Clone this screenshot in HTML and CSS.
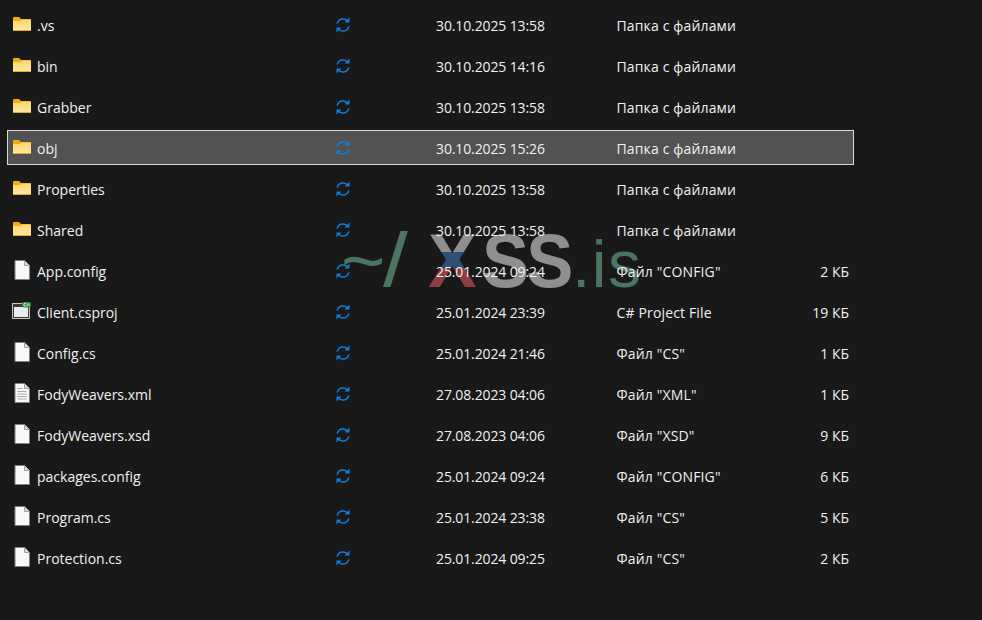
FILE: index.html
```html
<!DOCTYPE html>
<html lang="ru">
<head>
<meta charset="utf-8">
<title>Проводник</title>
<link rel="stylesheet" href="styles.css">
</head>
<body>
<svg class="defs" width="0" height="0" aria-hidden="true">
  <defs>
    <linearGradient id="fg" x1="0" y1="0" x2="0" y2="1">
      <stop offset="0" stop-color="#fbd667"/>
      <stop offset="1" stop-color="#ffe9a6"/>
    </linearGradient>
    <symbol id="folder" viewBox="0 0 18 14">
      <path d="M0 1a1 1 0 0 1 1-1h5l2 2h9a1 1 0 0 1 1 1v3H0z" fill="#f3ac14"/>
      <path d="M0 4h7l2-1.5h8a1 1 0 0 1 1 1V13a1 1 0 0 1-1 1H1a1 1 0 0 1-1-1z" fill="url(#fg)"/>
      <rect x="0" y="13" width="18" height="1" fill="#e6a92a"/>
    </symbol>
    <symbol id="file" viewBox="0 0 16 20">
      <path d="M1 .5H10.5L15.5 5.5V19.5H1z" fill="#f8f8f8" stroke="#7f7f7f"/>
      <path d="M10.5 .5V5.5H15.5" fill="#dcdcdc" stroke="#a0a0a0"/>
    </symbol>
    <symbol id="textfile" viewBox="0 0 16 20">
      <path d="M1 .5H10.5L15.5 5.5V19.5H1z" fill="#f8f8f8" stroke="#7f7f7f"/>
      <path d="M10.5 .5V5.5H15.5" fill="#dcdcdc" stroke="#a0a0a0"/>
      <path d="M3.5 5.5h5M3.5 8.5h9M3.5 11h9M3.5 13.5h9M3.5 16h9" stroke="#a8a8a8"/>
    </symbol>
    <symbol id="proj" viewBox="0 0 19 17">
      <rect x=".5" y="1.5" width="17" height="15" fill="#3a3a3a" stroke="#c4c4c4"/>
      <rect x="2" y="5" width="14" height="10" fill="#ececec"/>
      <rect x="10" y="0" width="9" height="5.5" rx="2" fill="#2f8f45"/>
      <path d="M13.6 1.4a1.4 1.4 0 1 0 0 2.7" fill="none" stroke="#e8f5ea" stroke-width="1"/>
      <path d="M15.2 1.4v2.7M17 1.4v2.7" stroke="#e8f5ea" stroke-width=".8"/>
    </symbol>
    <symbol id="sync" viewBox="0 0 16 16">
      <g fill="none" stroke="#0f7fdc" stroke-width="1.5">
        <path d="M2.2 6.6A6 6 0 0 1 13 4.6"/>
        <path d="M13.8 9.4A6 6 0 0 1 3 11.4"/>
      </g>
      <path d="M9.6 5.4h4.9V.6z" fill="#0f7fdc"/>
      <path d="M6.4 10.6H1.5v4.8z" fill="#0f7fdc"/>
    </symbol>
  </defs>
</svg>

<div class="wm" aria-hidden="true"><span class="wm-tilde">~</span><span class="wm-slash">/</span><span class="wm-x">X</span><span class="wm-ss">SS</span><span class="wm-is">.is</span></div>

<main class="list">
  <div class="row"><svg class="ico folder"><use href="#folder"/></svg><span class="name">.vs</span><svg class="sync"><use href="#sync"/></svg><span class="date">30.10.2025 13:58</span><span class="type">Папка с файлами</span><span class="size"></span></div>
  <div class="row"><svg class="ico folder"><use href="#folder"/></svg><span class="name">bin</span><svg class="sync"><use href="#sync"/></svg><span class="date">30.10.2025 14:16</span><span class="type">Папка с файлами</span><span class="size"></span></div>
  <div class="row"><svg class="ico folder"><use href="#folder"/></svg><span class="name">Grabber</span><svg class="sync"><use href="#sync"/></svg><span class="date">30.10.2025 13:58</span><span class="type">Папка с файлами</span><span class="size"></span></div>
  <div class="row selected"><svg class="ico folder"><use href="#folder"/></svg><span class="name">obj</span><svg class="sync"><use href="#sync"/></svg><span class="date">30.10.2025 15:26</span><span class="type">Папка с файлами</span><span class="size"></span></div>
  <div class="row"><svg class="ico folder"><use href="#folder"/></svg><span class="name">Properties</span><svg class="sync"><use href="#sync"/></svg><span class="date">30.10.2025 13:58</span><span class="type">Папка с файлами</span><span class="size"></span></div>
  <div class="row"><svg class="ico folder"><use href="#folder"/></svg><span class="name">Shared</span><svg class="sync"><use href="#sync"/></svg><span class="date">30.10.2025 13:58</span><span class="type">Папка с файлами</span><span class="size"></span></div>
  <div class="row"><svg class="ico file"><use href="#file"/></svg><span class="name">App.config</span><svg class="sync"><use href="#sync"/></svg><span class="date">25.01.2024 09:24</span><span class="type">Файл "CONFIG"</span><span class="size">2 КБ</span></div>
  <div class="row"><svg class="ico proj"><use href="#proj"/></svg><span class="name">Client.csproj</span><svg class="sync"><use href="#sync"/></svg><span class="date">25.01.2024 23:39</span><span class="type">C# Project File</span><span class="size">19 КБ</span></div>
  <div class="row"><svg class="ico file"><use href="#file"/></svg><span class="name">Config.cs</span><svg class="sync"><use href="#sync"/></svg><span class="date">25.01.2024 21:46</span><span class="type">Файл "CS"</span><span class="size">1 КБ</span></div>
  <div class="row"><svg class="ico file"><use href="#textfile"/></svg><span class="name">FodyWeavers.xml</span><svg class="sync"><use href="#sync"/></svg><span class="date">27.08.2023 04:06</span><span class="type">Файл "XML"</span><span class="size">1 КБ</span></div>
  <div class="row"><svg class="ico file"><use href="#file"/></svg><span class="name">FodyWeavers.xsd</span><svg class="sync"><use href="#sync"/></svg><span class="date">27.08.2023 04:06</span><span class="type">Файл "XSD"</span><span class="size">9 КБ</span></div>
  <div class="row"><svg class="ico file"><use href="#file"/></svg><span class="name">packages.config</span><svg class="sync"><use href="#sync"/></svg><span class="date">25.01.2024 09:24</span><span class="type">Файл "CONFIG"</span><span class="size">6 КБ</span></div>
  <div class="row"><svg class="ico file"><use href="#file"/></svg><span class="name">Program.cs</span><svg class="sync"><use href="#sync"/></svg><span class="date">25.01.2024 23:38</span><span class="type">Файл "CS"</span><span class="size">5 КБ</span></div>
  <div class="row"><svg class="ico file"><use href="#file"/></svg><span class="name">Protection.cs</span><svg class="sync"><use href="#sync"/></svg><span class="date">25.01.2024 09:25</span><span class="type">Файл "CS"</span><span class="size">2 КБ</span></div>
</main>
</body>
</html>
```
FILE: styles.css
```css
html, body { margin: 0; height: 100%; }
body {
  background: #191919;
  color: #f0f0f0;
  font-family: "Open Sans", "Noto Sans", sans-serif;
  font-size: 14px;
  overflow: hidden;
  position: relative;
}
.defs { position: absolute; }
.list {
  position: relative;
  display: flex;
  flex-direction: column;
  gap: 6px;
  width: 847px;
  margin-left: 7px;
  padding-top: 7px;
}
.row {
  display: grid;
  grid-template-columns: 29px 298px 101px 181px 1fr 60px;
  align-items: center;
  box-sizing: border-box;
  height: 35px;
  padding-right: 4px;
  border: 1px solid transparent;
}
.row.selected { background: #525252; border-color: #d8d8d8; }
.ico { display: block; justify-self: start; }
.ico.folder { width: 18px; height: 14px; margin-top: -1px; margin-left: 5px; }
.ico.file { width: 16px; height: 20px; margin-left: 6px; margin-top: -2px; }
.ico.proj { width: 19px; height: 17px; margin-left: 4px; margin-top: -3px; }
.sync { display: block; width: 16px; height: 16px; margin-top: 1px; }
.name, .date, .type, .size { white-space: nowrap; padding-top: 2px; }
.date { letter-spacing: -0.12px; }
.type { letter-spacing: 0.15px; margin-left: -0.5px; }
.size { text-align: right; }
.wm {
  position: absolute;
  left: 341px;
  top: 216px;
  display: flex;
  align-items: baseline;
  font-family: "Liberation Sans", sans-serif;
  font-size: 76px;
  line-height: 90px;
  white-space: nowrap;
}
.wm-tilde { color: #4a7561; width: 42px; }
.wm-slash {
  color: #4a7561;
  width: 45px;
  font-family: "DejaVu Sans", sans-serif;
  font-size: 68px;
  font-weight: 700;
  transform: translateY(-6px);
}
.wm-x {
  font-weight: 700;
  width: 54px;
  transform: scaleX(.96);
  transform-origin: left;
  background: linear-gradient(to bottom, #8f8f8f 0 36px, #2c5078 36px 52px, #8d3f3f 52px);
  background-clip: text;
  -webkit-background-clip: text;
  color: transparent;
}
.wm-ss {
  color: #8f8f8f;
  font-weight: 700;
  letter-spacing: -3px;
  width: 90px;
  transform: scaleX(.93);
  transform-origin: left;
}
.wm-is { color: #4a7561; font-size: 66px; letter-spacing: 1.5px; }
```
